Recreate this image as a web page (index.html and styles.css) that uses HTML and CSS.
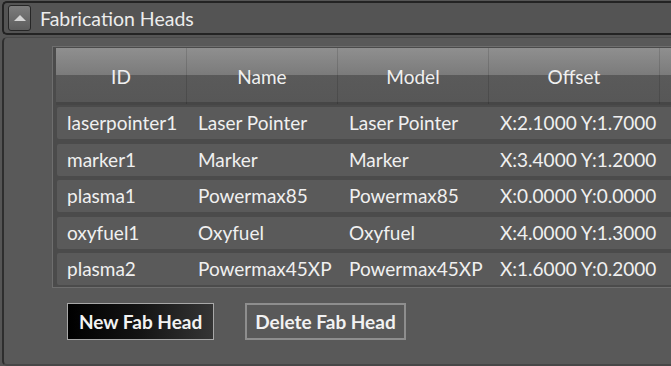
FILE: index.html
```html
<!DOCTYPE html>
<html lang="en">
<head>
<meta charset="UTF-8">
<title>Fabrication Heads</title>
<link rel="stylesheet" href="styles.css">
</head>
<body>
<div class="panel">
  <!-- Title bar -->
  <div class="panel-head">
    <button class="toggle"><span class="arrow"></span></button>
    <span class="panel-title">Fabrication Heads</span>
  </div>

  <div class="panel-body">
    <div class="grid">
      <div class="grid-head">
        <div class="col">ID</div>
        <div class="col">Name</div>
        <div class="col">Model</div>
        <div class="col">Offset</div>
        <div class="col"></div>
      </div>
      <div class="grid-row">
        <div class="cell">laserpointer1</div>
        <div class="cell">Laser Pointer</div>
        <div class="cell">Laser Pointer</div>
        <div class="cell">X:2.1000 Y:1.7000</div>
        <div class="cell"></div>
      </div>
      <div class="grid-row">
        <div class="cell">marker1</div>
        <div class="cell">Marker</div>
        <div class="cell">Marker</div>
        <div class="cell">X:3.4000 Y:1.2000</div>
        <div class="cell"></div>
      </div>
      <div class="grid-row">
        <div class="cell">plasma1</div>
        <div class="cell">Powermax85</div>
        <div class="cell">Powermax85</div>
        <div class="cell">X:0.0000 Y:0.0000</div>
        <div class="cell"></div>
      </div>
      <div class="grid-row">
        <div class="cell">oxyfuel1</div>
        <div class="cell">Oxyfuel</div>
        <div class="cell">Oxyfuel</div>
        <div class="cell">X:4.0000 Y:1.3000</div>
        <div class="cell"></div>
      </div>
      <div class="grid-row">
        <div class="cell">plasma2</div>
        <div class="cell">Powermax45XP</div>
        <div class="cell">Powermax45XP</div>
        <div class="cell">X:1.6000 Y:0.2000</div>
        <div class="cell"></div>
      </div>
    </div>

    <div class="actions">
      <button class="btn btn-dark">New Fab Head</button>
      <button class="btn">Delete Fab Head</button>
    </div>
  </div>
</div>
</body>
</html>
```

FILE: styles.css
```css
body {
  margin: 0;
  background: #555555;
  font-family: Lato, "Open Sans", sans-serif;
  color: #f0f0f0;
  overflow: hidden;
}
.panel {
  margin: 1px 0 0 2px;
  height: 365px;
  display: flex;
  flex-direction: column;
}
.panel-head {
  height: 30px;
  display: flex;
  align-items: center;
  gap: 9px;
  padding-left: 4px;
  background: #545454;
  border: 2px solid #232323;
  border-right: none;
  border-radius: 5px 0 0 5px;
}
.toggle {
  width: 23px;
  height: 26px;
  padding: 0;
  display: flex;
  align-items: center;
  justify-content: center;
  border: 1px solid #262626;
  border-radius: 3px;
  background: linear-gradient(to bottom, #7c7c7c, #5d5d5d);
}
.arrow {
  width: 0;
  height: 0;
  border-left: 6px solid transparent;
  border-right: 6px solid transparent;
  border-bottom: 6px solid #d6d6d6;
}
.panel-title {
  font-size: 19.5px;
  color: #ececec;
}
.panel-body {
  flex: 1;
  margin-top: 2px;
  padding: 8px 0 0 48px;
  background: #595959;
  border-left: 2px solid #2e2e2e;
  border-top: 1px solid #4a4a4a;
  border-bottom: 2px solid #474747;
  border-radius: 5px 0 0 5px;
  overflow: hidden;
}
.grid {
  width: 700px;
  padding: 1px 0 2px 3px;
  background: #4b4b4b;
  border: 1px solid #6e6e6e;
  border-right: none;
}
.grid-head {
  display: grid;
  grid-template-columns: 131px 151px 151px 171px 1fr;
  height: 54px;
  background: linear-gradient(to bottom, #8f8f8f 0%, #7b7b7b 50%, #5a5a5a 50%, #575757 100%);
  border-bottom: 3px solid #464646;
}
.grid-head .col {
  font-size: 19px;
  line-height: 54px;
  padding-top: 2px;
  text-align: center;
  border-right: 1px solid rgba(0,0,0,0.13);
}
.grid-row {
  display: grid;
  grid-template-columns: 130px 151px 151px 171px 1fr;
  height: 32px;
  margin: 4.5px 0 0 1px;
  background: #5a5a5a;
  border-radius: 2px;
}
.grid-head + .grid-row {
  margin-top: 2px;
}
.cell {
  font-size: 19px;
  line-height: 32px;
  padding-left: 11px;
  white-space: nowrap;
}
.cell:first-child {
  padding-left: 10px;
}
.actions {
  display: flex;
  gap: 31px;
  margin-top: 15px;
  padding-left: 15px;
}
.btn {
  height: 37px;
  padding: 0 8px;
  font-family: Lato, "Open Sans", sans-serif;
  font-size: 19px;
  font-weight: bold;
  color: #f2f2f2;
  background: #595959;
  border: 2px solid #8e8e8e;
}
.btn-dark {
  border: 1px solid #a8a8a8;
  padding: 0 11px;
  background: linear-gradient(to right, #000000 0%, #141414 50%, #353535 100%);
}
```
